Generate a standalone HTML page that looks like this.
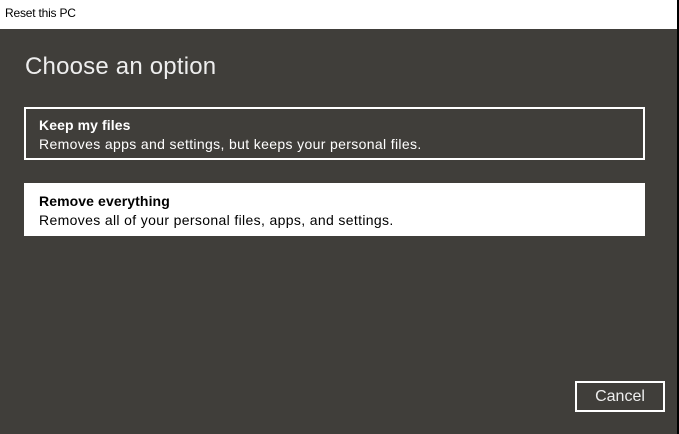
<!DOCTYPE html>
<html><head><style>
body{margin:0;width:679px;height:434px;overflow:hidden;font-family:"Liberation Sans",sans-serif;background:#fff;position:relative}
.title{position:absolute;left:5px;top:6px;font-size:12px;color:#000;letter-spacing:-0.2px}
.main{position:absolute;left:0;top:29px;width:677px;height:405px;background:#403e3a}
.edge{position:absolute;left:677px;top:0;width:2px;height:434px;background:#000}
h1{position:absolute;left:25px;top:24px;margin:0;font-weight:normal;font-size:24px;color:#eee;letter-spacing:0.2px}
.opt{position:absolute;left:24px;width:621px;height:53px;box-sizing:border-box;padding:10px 15px;font-size:14px;letter-spacing:0.35px}
.opt b{display:block;margin-bottom:3px;letter-spacing:0.1px}
.o1{top:78px;border:2px solid #fff;color:#fff;padding:8px 13px}
.o2{top:154px;background:#fff;color:#000}
.cancel{position:absolute;left:575px;top:352px;width:90px;height:31px;box-sizing:border-box;border:2px solid #fff;color:#eee;font-size:16px;text-align:center;line-height:28px}
</style></head><body>
<div class="title">Reset this PC</div>
<div class="main">
<h1>Choose an option</h1>
<div class="opt o1"><b>Keep my files</b>Removes apps and settings, but keeps your personal files.</div>
<div class="opt o2"><b>Remove everything</b>Removes all of your personal files, apps, and settings.</div>
<div class="cancel">Cancel</div>
</div>
<div class="edge"></div>
</body></html>
